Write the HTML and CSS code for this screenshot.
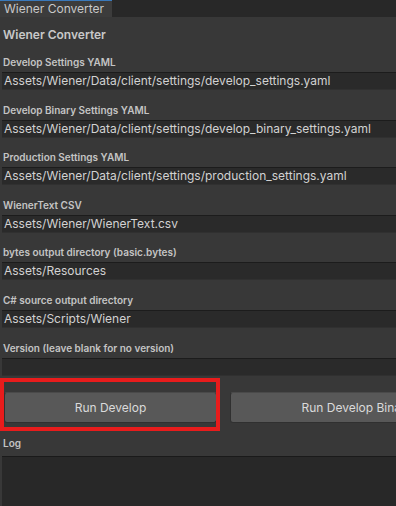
FILE: index.html
```html
<!DOCTYPE html>
<html>
<head>
<meta charset="UTF-8">
<title>Wiener Converter</title>
<link rel="stylesheet" href="styles.css">
</head>
<body>
	<div class="tabbar">
		<div class="tab">Wiener Converter</div>
	</div>
	<div class="panel">
		<div class="title">Wiener Converter</div>

		<div class="group">
			<div class="label">Develop Settings YAML</div>
			<div class="field">Assets/Wiener/Data/client/settings/develop_settings.yaml</div>
		</div>
		<div class="group">
			<div class="label">Develop Binary Settings YAML</div>
			<div class="field">Assets/Wiener/Data/client/settings/develop_binary_settings.yaml</div>
		</div>
		<div class="group">
			<div class="label">Production Settings YAML</div>
			<div class="field">Assets/Wiener/Data/client/settings/production_settings.yaml</div>
		</div>
		<div class="group">
			<div class="label">WienerText CSV</div>
			<div class="field">Assets/Wiener/WienerText.csv</div>
		</div>
		<div class="group">
			<div class="label">bytes output directory (basic.bytes)</div>
			<div class="field">Assets/Resources</div>
		</div>
		<div class="group">
			<div class="label">C# source output directory</div>
			<div class="field">Assets/Scripts/Wiener</div>
		</div>
		<div class="group">
			<div class="label">Version (leave blank for no version)</div>
			<div class="field"></div>
		</div>

		<div class="buttons">
			<div class="button first">Run Develop</div>
			<div class="button second">Run Develop Binary</div>
			<div class="highlight"></div>
		</div>

		<div class="label log-label">Log</div>
		<div class="log"></div>
	</div>
</body>
</html>
```

FILE: styles.css
```css
html, body {
	margin: 0;
	padding: 0;
	height: 100%;
	overflow: hidden;
	background-color: #383838;
}

body {
	font-family: Inter, "Noto Sans", sans-serif;
	color: #c4c4c4;
	display: flex;
	flex-direction: column;
}

.tabbar {
	height: 17px;
	background-color: #282828;
	display: flex;
	flex-shrink: 0;
}

.tab {
	width: 112px;
	padding-left: 4px;
	background-color: #3c3c3c;
	border-top: 1px solid #3a79bb;
	box-sizing: border-box;
	font-size: 12px;
	line-height: 16px;
	color: #c8c8c8;
}

.panel {
	flex: 1;
	display: flex;
	flex-direction: column;
	padding: 8px 0 0 2px;
	min-height: 0;
}

.title {
	font-size: 12px;
	font-weight: 600;
	line-height: 20px;
	padding-left: 1px;
	color: #c8c8c8;
}

.group {
	margin-top: 7px;
}

.group + .group {
	margin-top: 9.6px;
}

.label {
	font-size: 10px;
	font-weight: 600;
	line-height: 20px;
	padding-left: 1px;
	color: #c4c4c4;
	white-space: nowrap;
}

.field {
	height: 18px;
	box-sizing: border-box;
	margin-top: 0;
	padding-left: 2px;
	background-color: #2a2a2a;
	border-top: 1px solid #1c1c1c;
	border-bottom: 1px solid #303030;
	font-size: 12px;
	line-height: 16px;
	color: #d2d2d2;
	white-space: nowrap;
	overflow: hidden;
}

.buttons {
	position: relative;
	display: flex;
	gap: 13px;
	margin-top: 16px;
	padding-left: 2px;
	white-space: nowrap;
}

.button {
	flex-shrink: 0;
	height: 31px;
	box-sizing: border-box;
	background-color: #585858;
	border: 1px solid #303030;
	border-top-color: #4a4a4a;
	border-radius: 3px;
	font-size: 12px;
	line-height: 29px;
	text-align: center;
	color: #dadada;
}

.first {
	width: 213px;
}

.second {
	width: 254px;
}

.highlight {
	position: absolute;
	left: -2px;
	top: -14px;
	width: 212px;
	height: 45px;
	border: 4px solid #e81c1c;
}

.log-label {
	margin-top: 10px;
}

.log {
	flex: 1;
	margin-top: 3px;
	background-color: #282828;
	border-top: 1px solid #1a1a1a;
}
```
